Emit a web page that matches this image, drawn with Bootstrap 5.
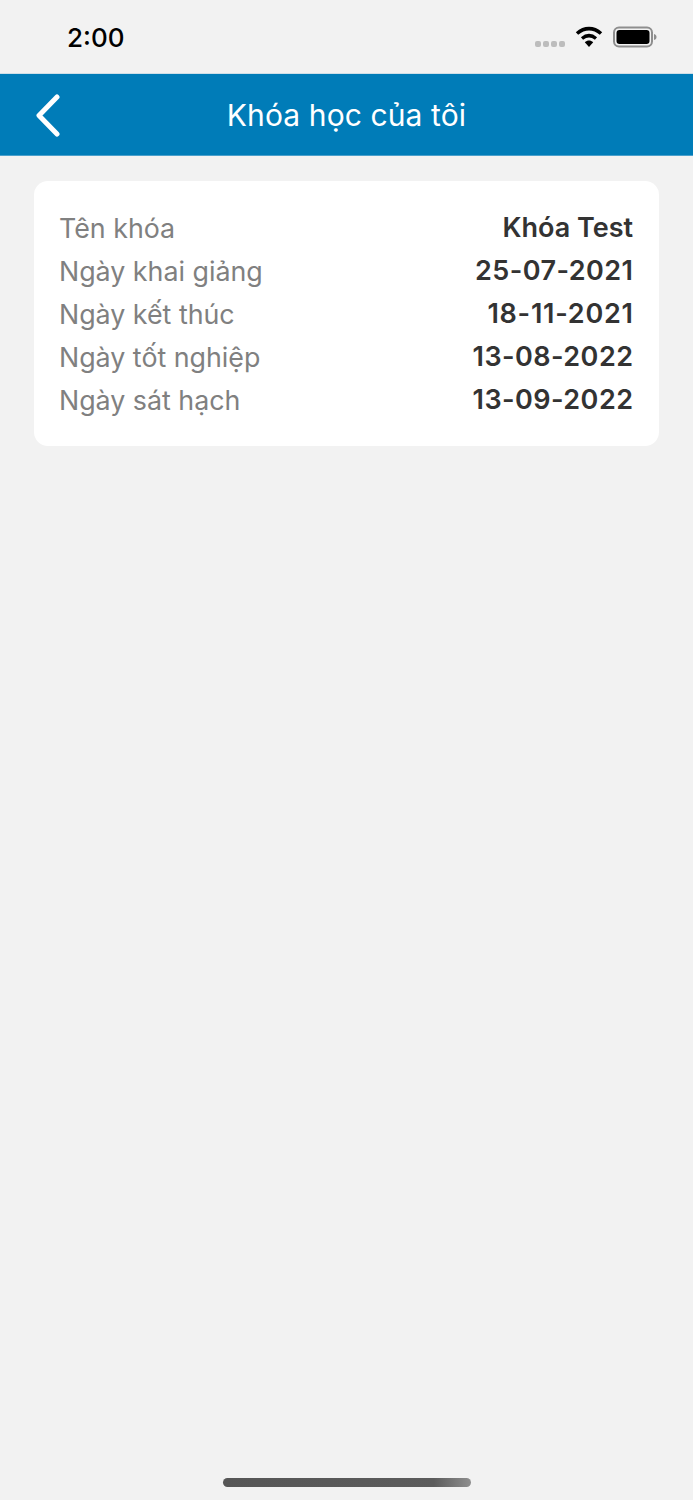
<!DOCTYPE html>
<html lang="en">
<head>
  <meta charset="UTF-8">
  <meta name="viewport" content="width=device-width, initial-scale=1">
  <title>Khóa học của tôi</title>
  <link href="https://cdn.jsdelivr.net/npm/bootstrap@5.3.0/dist/css/bootstrap.min.css" rel="stylesheet" />
  <style>
    body { background: #f2f2f2; font-family: Inter, "Noto Sans", sans-serif; height: 1500px; }
    .status-bar { height: 73px; padding: 0 36px 0 67px; }
    .status-time { font-size: 26px; font-weight: 500; color: #000; line-height: 1; margin-top: 3px; }
    .signal-dots { gap: 2px; margin: 15px 10px 0 0; }
    .signal-dots i { width: 6px; height: 6px; border-radius: 2px; background: #bdbdbd; }
    .wifi-icon { margin-right: 10px; }
    .top-bar { height: 83px; background: #007cb8; border-top: 1px solid #cfdfe8; border-bottom: 1px solid #4aa0cc; }
    .top-title { font-size: 30px; letter-spacing: .1px; color: #fff; line-height: 1; }
    .back-btn { left: 35px; top: 20px; }
    .course-box { margin: 25px 34px 0; padding: 25px 26px 25px 25px; border-radius: 14px; }
    .course-row { height: 43px; font-size: 27px; line-height: 40px; }
    .course-label { color: #808080; font-size: 26.8px; }
    .course-value { color: #333; font-weight: 600; }
    .course-date { letter-spacing: .45px; margin-right: -.45px; }
    .course-date-narrow { letter-spacing: .75px; margin-right: -.75px; }
    .home-bar { left: 223px; top: 1478px; width: 248px; height: 9px; border-radius: 5px; background: linear-gradient(90deg, #565656 0%, #5c5c5c 85%, #8f8f8f 100%); }
  </style>
</head>
<body class="position-relative">
  <!-- Status bar -->
  <div class="status-bar d-flex align-items-center justify-content-between">
    <div class="status-time">2:00</div>
    <div class="d-flex align-items-center">
      <div class="signal-dots d-flex"><i></i><i></i><i></i><i></i></div>
      <svg width="28" height="22" viewBox="0 0 28 22" class="wifi-icon">
        <path d="M2 7.5C9.500 1 18.500 1 26 7.500" fill="none" stroke="#000" stroke-width="3.600"/>
        <path d="M7 12.500C11.500 8.800 16.500 8.800 21 12.500" fill="none" stroke="#000" stroke-width="3.400"/>
        <path d="M9.800 16.200C12.500 13.800 15.500 13.800 18.200 16.200L14 21Z" fill="#000"/>
      </svg>
      <svg width="44" height="22" viewBox="0 0 44 22">
        <rect x="1" y="1.500" width="38" height="19" rx="5" fill="none" stroke="#8e8e8e" stroke-width="2"/>
        <rect x="3.500" y="4" width="33" height="14" rx="3" fill="#000"/>
        <path d="M41 8C42.800 8.500 43.500 9.500 43.500 11S42.800 13.500 41 14Z" fill="#8e8e8e"/>
      </svg>
    </div>
  </div>

  <!-- Header -->
  <div class="top-bar position-relative d-flex align-items-center justify-content-center">
    <svg class="back-btn position-absolute" width="26" height="44" viewBox="0 0 26 44">
      <path d="M22 3L4 21.500L22 40" fill="none" stroke="#fff" stroke-width="5" stroke-linecap="round" stroke-linejoin="round"/>
    </svg>
    <div class="top-title">Khóa học của tôi</div>
  </div>

  <!-- Course info -->
  <div class="course-box bg-white">
    <div class="course-row d-flex justify-content-between align-items-center"><span class="course-label">Tên khóa</span><span class="course-value">Khóa Test</span></div>
    <div class="course-row d-flex justify-content-between align-items-center"><span class="course-label">Ngày khai giảng</span><span class="course-value course-date">25-07-2021</span></div>
    <div class="course-row d-flex justify-content-between align-items-center"><span class="course-label">Ngày kết thúc</span><span class="course-value course-date-narrow">18-11-2021</span></div>
    <div class="course-row d-flex justify-content-between align-items-center"><span class="course-label">Ngày tốt nghiệp</span><span class="course-value course-date">13-08-2022</span></div>
    <div class="course-row d-flex justify-content-between align-items-center"><span class="course-label">Ngày sát hạch</span><span class="course-value course-date">13-09-2022</span></div>
  </div>

  <div class="home-bar position-absolute"></div>

  <script src="https://cdn.jsdelivr.net/npm/bootstrap@5.3.0/dist/js/bootstrap.bundle.min.js"></script>
</body>
</html>
